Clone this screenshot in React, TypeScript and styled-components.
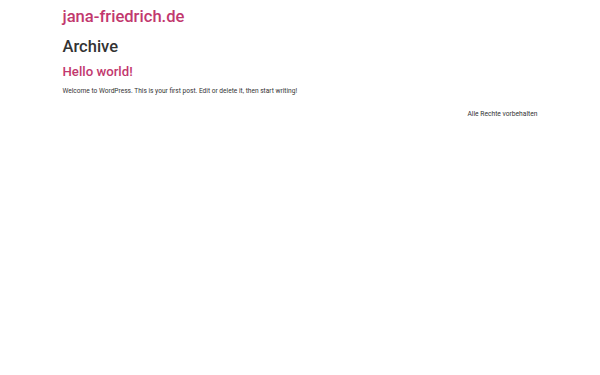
import React from "react";
import styled, { createGlobalStyle } from "styled-components";

const Global = createGlobalStyle`
  html, body { margin: 0; padding: 0; background: #fff; }
  body { font-family: Roboto, "Liberation Sans", Arial, sans-serif; color: #333; }
`;

const Page = styled.div`
  width: 475px;
  margin: 0 auto;
  display: flex;
  flex-direction: column;
`;

const Header = styled.header`
  padding-top: 7px;
`;

const SiteTitle = styled.a`
  display: block;
  font-size: 16.6px;
  font-weight: 500;
  line-height: 20px;
  color: #c2386e;
  text-decoration: none;
`;

const Main = styled.main`
  display: flex;
  flex-direction: column;
`;

const PageTitle = styled.h1`
  margin: 10px 0 0;
  font-size: 16.5px;
  font-weight: 500;
  line-height: 20px;
  color: #333;
`;

const PostTitle = styled.h2`
  margin: 7px 0 0;
  font-size: 13.2px;
  font-weight: 500;
  line-height: 16px;
  color: #c2386e;
`;

const Excerpt = styled.p`
  margin: 6px 0 0;
  font-size: 6.6px;
  line-height: 10px;
  color: #333;
`;

const Footer = styled.footer`
  margin-top: 13px;
  display: flex;
  justify-content: flex-end;
  font-size: 6.7px;
  line-height: 10px;
  color: #333;
`;

export default function App() {
  return (
    <>
      <Global />
      <Page>
        <Header>
          <SiteTitle href="#">jana-friedrich.de</SiteTitle>
        </Header>
        <Main>
          <PageTitle>Archive</PageTitle>
          <PostTitle>Hello world!</PostTitle>
          <Excerpt>Welcome to WordPress. This is your first post. Edit or delete it, then start writing!</Excerpt>
        </Main>
        <Footer>Alle Rechte vorbehalten</Footer>
      </Page>
    </>
  );
}
